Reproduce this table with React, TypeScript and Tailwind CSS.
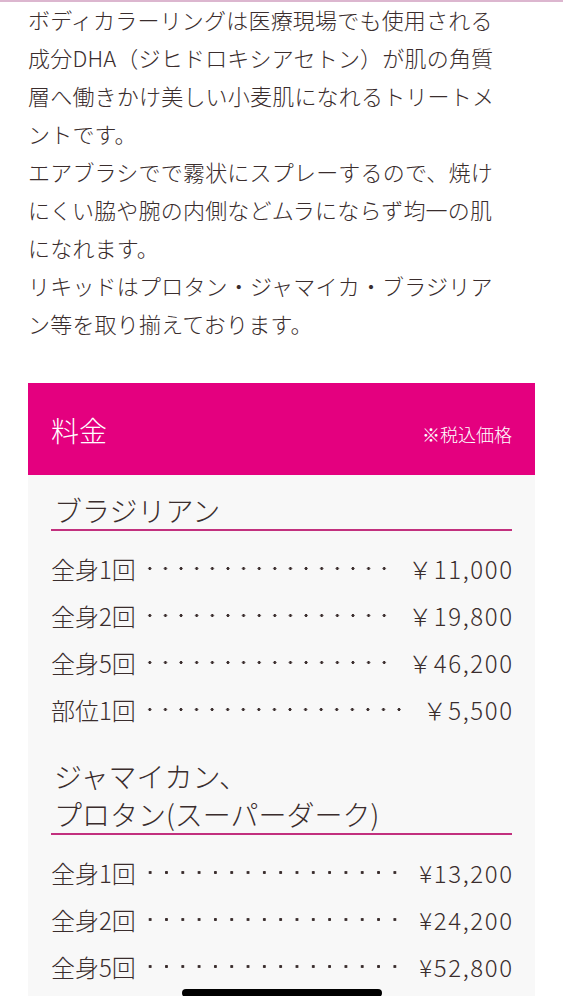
import React from "react";

const font = { fontFamily: '"Noto Sans CJK JP", "Noto Sans", sans-serif' };

type Row = { label: string; price: string };

const brazil: Row[] = [
  { label: "全身1回", price: "￥11,000" },
  { label: "全身2回", price: "￥19,800" },
  { label: "全身5回", price: "￥46,200" },
  { label: "部位1回", price: "￥5,500" },
];

const jamaica: Row[] = [
  { label: "全身1回", price: "¥13,200" },
  { label: "全身2回", price: "¥24,200" },
  { label: "全身5回", price: "¥52,800" },
];

function PriceRow({ row }: { row: Row }) {
  return (
    <div className="flex items-center h-[47px] text-[24px] leading-[47px]">
      <span className="whitespace-nowrap">{row.label}</span>
      <span className="flex-1 h-full ml-[6px] mr-[16px] bg-[radial-gradient(circle,#3a2d2d_1.3px,transparent_1.8px)] bg-[length:16px_100%] bg-repeat-round bg-left" />
      <span className="whitespace-nowrap tracking-[1.6px] mr-[-1.6px]">{row.price}</span>
    </div>
  );
}

function Section({ title, rows }: { title: React.ReactNode; rows: Row[] }) {
  return (
    <div className="mb-[24px]">
      <div className="text-[28px] leading-[38px] border-b-2 border-[#c2307e] pl-[3px]">{title}</div>
      <div className="mt-[14px]">
        {rows.map((r, i) => (
          <PriceRow key={i} row={r} />
        ))}
      </div>
    </div>
  );
}

export default function App() {
  const lines1 = [
    "ボディカラーリングは医療現場でも使用される",
    "成分DHA（ジヒドロキシアセトン）が肌の角質",
    "層へ働きかけ美しい小麦肌になれるトリートメ",
    "ントです。",
  ];
  const lines2 = [
    "エアブラシでで霧状にスプレーするので、焼け",
    "にくい脇や腕の内側などムラにならず均一の肌",
    "になれます。",
  ];
  const lines3 = [
    "リキッドはプロタン・ジャマイカ・ブラジリア",
    "ン等を取り揃えております。",
  ];
  return (
    <div className="relative w-[563px] h-[996px] overflow-hidden bg-white text-[#3a2d2d] font-light" style={font}>
      <div className="absolute top-0 left-0 right-0 h-[2px] bg-[#dcb6cf]" />
      <div className="pl-[28px] text-[22px] leading-[38px] whitespace-nowrap tracking-[0.2px]">
        {[lines1, lines2, lines3].map((p, i) => (
          <p key={i}>
            {p.map((l, j) => (
              <span key={j} className="block">
                {l}
              </span>
            ))}
          </p>
        ))}
      </div>
      <div className="mx-[28px] mt-[41px]">
        <div className="h-[92px] bg-[#e4007f] text-white flex items-baseline justify-between px-[23px] pt-[28px]">
          <span className="text-[28px] leading-[38px]">料金</span>
          <span className="text-[18px] leading-[38px]">※税込価格</span>
        </div>
        <div className="bg-[#f8f8f8] px-[23px] pt-[16px] pb-[40px]">
          <Section title="ブラジリアン" rows={brazil} />
          <Section
            title={
              <>
                ジャマイカン、
                <br />
                プロタン(スーパーダーク)
              </>
            }
            rows={jamaica}
          />
        </div>
      </div>
      <div className="absolute left-[182px] top-[989px] w-[200px] h-[8px] rounded-full bg-black" />
    </div>
  );
}
